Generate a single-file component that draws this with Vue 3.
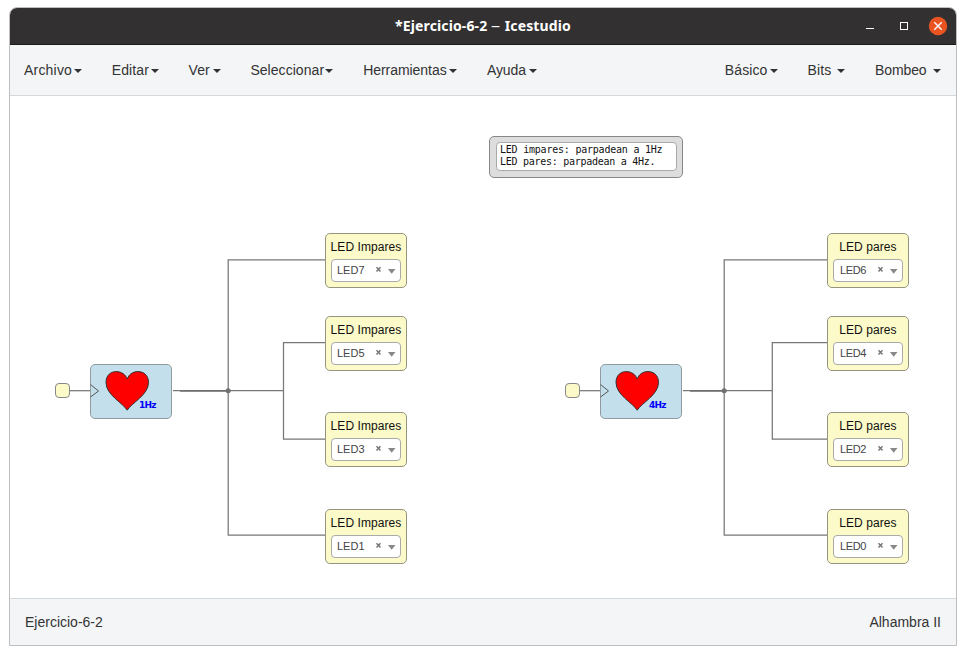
<script setup>
const leftMenus = [
  { label: 'Archivo', width: 58, spacing: 0.2 },
  { label: 'Editar', width: 47, spacing: 0.1 },
  { label: 'Ver', width: 32, spacing: 0 },
  { label: 'Seleccionar', width: 83, spacing: 0.05 },
  { label: 'Herramientas', width: 94, spacing: -0.05 },
  { label: 'Ayuda', width: 50, spacing: -0.1 },
]
const rightMenus = [
  { label: 'Básico', width: 53, spacing: 0.1 },
  { label: 'Bits', width: 38, spacing: 0.2 },
  { label: 'Bombeo', width: 66, spacing: -0.1 },
]

const outputs = [
  { title: 'LED Impares', pin: 'LED7', x: 315, y: 137 },
  { title: 'LED Impares', pin: 'LED5', x: 315, y: 220 },
  { title: 'LED Impares', pin: 'LED3', x: 315, y: 316 },
  { title: 'LED Impares', pin: 'LED1', x: 315, y: 413 },
  { title: 'LED pares', pin: 'LED6', x: 817, y: 137, pares: true },
  { title: 'LED pares', pin: 'LED4', x: 817, y: 220, pares: true },
  { title: 'LED pares', pin: 'LED2', x: 817, y: 316, pares: true },
  { title: 'LED pares', pin: 'LED0', x: 817, y: 413, pares: true },
]

const hearts = [
  { label: '1Hz', x: 80, y: 268 },
  { label: '4Hz', x: 590, y: 268 },
]

const wires = [
  'M60 294.7H80', 'M163 294.7H273.5', 'M218.2 294.5V163.8H315', 'M218.2 294.5V439.2H315',
  'M273.5 294.5V246.5H315', 'M273.5 294.5V343H315',
  'M570 294.7H590', 'M673 294.7H762.3', 'M714.2 294.5V163.8H817', 'M714.2 294.5V439.2H817',
  'M762.3 294.5V246.5H817', 'M762.3 294.5V343H817',
]
const trunks = ['M170 294.8H219', 'M680 294.8H715']

const place = (node) => ({ left: node.x + 'px', top: node.y + 'px' })
</script>

<template>
  <div class="desktop">
    <div class="window">
      <header class="titlebar">
        <span class="spacer"></span>
        <h1>*Ejercicio-6-2 <span class="dash">–</span> Icestudio</h1>
        <div class="controls">
          <svg width="86" height="20" viewBox="0 0 86 20">
            <path d="M6 11.5H14" stroke="#fff" />
            <rect x="40.5" y="5.5" width="7" height="7" fill="none" stroke="#fff" />
            <circle cx="78" cy="9" r="9.2" fill="#e95420" />
            <path d="M74.3 5.3L81.7 12.7M81.7 5.3L74.3 12.7" stroke="#fff" stroke-width="1.4" />
          </svg>
        </div>
      </header>

      <nav class="menubar">
        <div class="group">
          <div v-for="m in leftMenus" :key="m.label" class="menu" :style="{ width: m.width + 'px', letterSpacing: m.spacing + 'px' }">
            {{ m.label }}<i class="caret"></i>
          </div>
        </div>
        <div class="group">
          <div v-for="m in rightMenus" :key="m.label" class="menu" :style="{ width: m.width + 'px', letterSpacing: m.spacing + 'px' }">
            {{ m.label }}<i class="caret"></i>
          </div>
        </div>
      </nav>

      <main class="canvas">
        <svg class="wires" width="946" height="502" viewBox="0 0 946 502">
          <path v-for="d in wires" :key="d" :d="d" fill="none" stroke="#777" stroke-width="1.25" />
          <path v-for="d in trunks" :key="d" :d="d" fill="none" stroke="#707070" stroke-width="1.8" />
          <circle cx="218.2" cy="294.8" r="2.5" fill="#707070" />
          <circle cx="714.2" cy="294.8" r="2.5" fill="#707070" />
        </svg>

        <section class="note">
          <div class="note-text">
            <span class="line first">LED impares: parpadean a 1Hz</span>
            <span class="line">LED pares: parpadean a 4Hz.</span>
          </div>
        </section>

        <div v-for="h in hearts" :key="h.label" class="heart" :style="place(h)">
          <i class="port"></i>
          <svg width="82" height="55" viewBox="1 1 82 55">
            <path d="M1.5 21.5L9.5 28L1.5 34" fill="none" stroke="#555" />
            <path d="M38.2 47.2C34 40 17 32 17 19.5C17 12 22 8.6 27.2 8.6C32.5 8.6 36.5 11.5 38.2 16C40 11.5 43.5 8.6 49 8.6C54.5 8.6 59.5 12 59.5 19.5C59.5 32 42.5 40 38.2 47.2Z" fill="#f00" stroke="#333" />
            <text x="50" y="45" textLength="17.5">{{ h.label }}</text>
          </svg>
        </div>

        <div v-for="o in outputs" :key="o.pin" class="output" :class="{ pares: o.pares }" :style="place(o)">
          <div class="title">{{ o.title }}</div>
          <div class="select">
            <span class="pin">{{ o.pin }}</span>
            <svg width="21" height="10" viewBox="0 0 21 10">
              <path d="M1.5 2.2L5.5 6.5M5.5 2.2L1.5 6.5" stroke="#777" stroke-width="1.5" />
              <path d="M13 4H20.5L16.7 8.7Z" fill="#888" />
            </svg>
          </div>
        </div>
      </main>

      <footer class="statusbar">
        <span class="project">Ejercicio-6-2</span>
        <span class="board">Alhambra II</span>
      </footer>
    </div>
  </div>
</template>

<style>
body {
  margin: 0;
  background: #fff;
}
</style>

<style scoped>
* {
  box-sizing: border-box;
}
.desktop {
  width: 966px;
  height: 655px;
  padding: 7px 9px;
  font-family: "Liberation Sans", Arial, sans-serif;
  color: #333;
}
.window {
  display: flex;
  flex-direction: column;
  width: 948px;
  height: 639px;
  border: 1px solid #bfbfbf;
  border-radius: 8px 8px 0 0;
  overflow: hidden;
}
.titlebar {
  display: grid;
  grid-template-columns: 1fr auto 1fr;
  align-items: center;
  height: 37px;
  background: #323031;
  border-bottom: 1px solid #1c1b1b;
  color: #fff;
}
h1 {
  margin: 0;
  font: bold 14px/20px "Noto Sans", sans-serif;
  letter-spacing: 0.12px;
  white-space: nowrap;
}
.dash {
  display: inline-block;
  width: 10px;
  font-weight: 400;
  transform: scaleX(1.3);
  transform-origin: 0 50%;
}
.controls {
  display: flex;
  justify-content: flex-end;
  padding: 1px 10px 0 0;
}
.controls svg {
  overflow: visible;
}
.menubar {
  display: flex;
  justify-content: space-between;
  height: 51px;
  padding: 0 15px 0 14px;
  background: #f4f5f7;
  border-bottom: 1px solid #d5d9dc;
  font-size: 14px;
}
.group {
  display: flex;
  align-items: center;
  gap: 29.6px;
}
.group:first-child {
  column-gap: 29.8px;
}
.menu {
  display: flex;
  align-items: center;
  justify-content: space-between;
  white-space: nowrap;
}
.caret {
  flex: none;
  margin-top: 2px;
  border: 4px solid transparent;
  border-top-color: #333;
  border-bottom: 0;
}
.canvas {
  position: relative;
  height: 502px;
  background: #fff;
}
.wires {
  display: block;
}
.note {
  position: absolute;
  left: 479px;
  top: 40px;
  width: 194px;
  height: 42px;
  padding: 5px 6px;
  background: #ddd;
  border: 1px solid #888;
  border-radius: 5px;
}
.note-text {
  display: flex;
  flex-direction: column;
  width: 181px;
  height: 29px;
  padding: 1px 3px;
  background: #fff;
  border: 1px solid #aaa;
  border-radius: 4px;
  color: #111;
  font: 10px/12px "DejaVu Sans Mono", monospace;
}
.line {
  white-space: pre;
  letter-spacing: -0.27px;
}
.line.first {
  letter-spacing: -0.22px;
}
.heart {
  position: absolute;
  width: 82px;
  height: 55px;
  background: #c2dfeb;
  border: 1px solid #929ba0;
  border-radius: 5px;
}
.heart svg {
  display: block;
  margin: -1px;
}
.heart text {
  fill: #00f;
  font: bold 9px "DejaVu Sans", sans-serif;
}
.port {
  position: absolute;
  left: -36px;
  top: 18px;
  width: 15px;
  height: 15px;
  background: #fbfac8;
  border: 1px solid #888;
  border-radius: 4px;
}
.output {
  position: absolute;
  width: 82px;
  height: 55px;
  padding: 4px 5px;
  background: #fbfac8;
  border: 1px solid #95957f;
  border-radius: 5px;
  color: #111;
}
.title {
  height: 21px;
  margin: 0 -4px;
  font-size: 12px;
  line-height: 18px;
  letter-spacing: 0.08px;
  text-align: center;
  white-space: nowrap;
}
.select {
  display: flex;
  align-items: center;
  justify-content: space-between;
  width: 70px;
  height: 23px;
  padding: 0 4px 1px 5px;
  background: #fff;
  border: 1px solid #aaa;
  border-radius: 4px;
  color: #444;
}
.pin {
  font-size: 11px;
}
.pares .pin {
  padding-left: 1px;
  letter-spacing: -0.35px;
}
.statusbar {
  display: flex;
  align-items: center;
  justify-content: space-between;
  height: 47px;
  padding: 0 15px;
  background: #f4f5f7;
  border-top: 1px solid #d3d9dc;
  font-size: 14px;
}
</style>
